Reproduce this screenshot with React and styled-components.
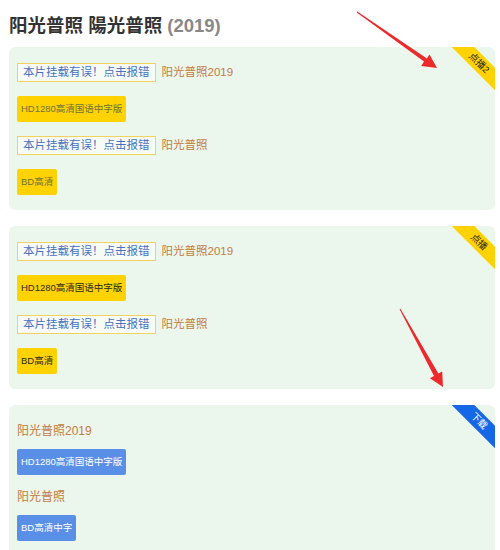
import React from "react";
import styled, { createGlobalStyle } from "styled-components";

const Global = createGlobalStyle`
  html, body { margin: 0; padding: 0; background: #fff; }
  body { font-family: "Liberation Sans", "Noto Sans CJK SC", sans-serif; }
`;

const Page = styled.div`
  position: relative;
  width: 500px;
  height: 550px;
  overflow: hidden;
  box-sizing: border-box;
  padding: 12px 5px 0 9px;
`;

const Heading = styled.h2`
  margin: 0 0 7px;
  font-size: 18.5px;
  line-height: 28px;
  font-weight: bold;
  color: #333;
`;

const Year = styled.span`
  color: #888;
`;

const Card = styled.section`
  position: relative;
  overflow: hidden;
  background: #ebf6ec;
  border-radius: 6px;
  padding: 16px 8px 15px;
  margin-bottom: 16px;
  display: flex;
  flex-direction: column;
  align-items: flex-start;
  gap: ${(p) => p.$gap || 14}px;
`;

const Ribbon = styled.div`
  position: absolute;
  top: 8px;
  right: -24px;
  width: 80px;
  height: 16px;
  line-height: 16px;
  text-align: center;
  font-size: 9.5px;
  transform: rotate(45deg);
  background: ${(p) => (p.$tone === "blue" ? "#1667e6" : "#ffd200")};
  color: ${(p) => (p.$tone === "blue" ? "#fff" : "#222")};
`;

const Row = styled.div`
  display: flex;
  align-items: center;
  height: 19px;
`;

const Report = styled.span`
  box-sizing: border-box;
  height: 19px;
  line-height: 17px;
  padding: 0 5px;
  border: 1px solid #f3d25c;
  background: #f6fbf6;
  color: #4672c2;
  font-size: 11.5px;
`;

const Name = styled.span`
  margin-left: 6px;
  color: #c47b42;
  font-size: 11.5px;
  line-height: 19px;
`;

const FileTitle = styled.div`
  color: #c47b42;
  font-size: 12px;
  line-height: 20px;
`;

const Group = styled.div`
  display: flex;
  flex-direction: column;
  align-items: flex-start;
  gap: 8px;
`;

const tones = {
  pale: { bg: "#ffd200", fg: "#6e7240" },
  yellow: { bg: "#ffd200", fg: "#2a2a2a" },
  blue: { bg: "#5a8fe8", fg: "#ffffff" },
};

const Btn = styled.span`
  display: inline-block;
  height: 26px;
  line-height: 26px;
  padding: 0 4px;
  font-size: 9.5px;
  border-radius: 2px;
  background: ${(p) => tones[p.$tone].bg};
  color: ${(p) => tones[p.$tone].fg};
`;

const Overlay = styled.svg`
  position: absolute;
  left: 0;
  top: 0;
  pointer-events: none;
`;

function PlayCard({ ribbon, tone }) {
  return (
    <Card>
      <Ribbon>{ribbon}</Ribbon>
      <Row>
        <Report>本片挂载有误！点击报错</Report>
        <Name>阳光普照2019</Name>
      </Row>
      <Btn $tone={tone}>HD1280高清国语中字版</Btn>
      <Row>
        <Report>本片挂载有误！点击报错</Report>
        <Name>阳光普照</Name>
      </Row>
      <Btn $tone={tone}>BD高清</Btn>
    </Card>
  );
}

export default function App() {
  return (
    <>
      <Global />
      <Page>
        <Heading>
          阳光普照 陽光普照 <Year>(2019)</Year>
        </Heading>
        <PlayCard ribbon="点播2" tone="pale" />
        <PlayCard ribbon="点播" tone="yellow" />
        <Card $gap={12}>
          <Ribbon $tone="blue">下载</Ribbon>
          <Group>
            <FileTitle>阳光普照2019</FileTitle>
            <Btn $tone="blue">HD1280高清国语中字版</Btn>
          </Group>
          <Group>
            <FileTitle>阳光普照</FileTitle>
            <Btn $tone="blue">BD高清中字</Btn>
          </Group>
        </Card>
        <Overlay width="500" height="550" viewBox="0 0 500 550">
          <polygon
            fill="#ec2a2c"
            points="356.7,12.4 424.0,61.4 421.2,66.0 437,68 429.5,54.4 426.9,58.6 357.3,11.6"
          />
          <polygon
            fill="#ec2a2c"
            points="399.6,309.2 434.0,375.9 429.9,378.3 443,387 442.2,371.4 438.4,373.5 400.4,308.8"
          />
        </Overlay>
      </Page>
    </>
  );
}
